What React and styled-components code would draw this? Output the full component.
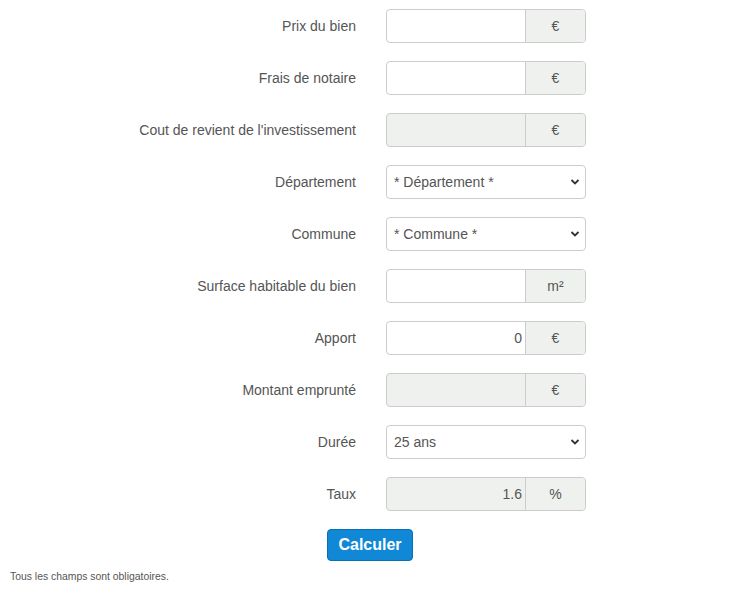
import React from "react";
import styled, { createGlobalStyle } from "styled-components";

const GlobalStyle = createGlobalStyle`
  body {
    margin: 0;
    background: #fff;
    font-family: "Liberation Sans", Arial, sans-serif;
    color: #555;
  }
`;

const Page = styled.div`
  width: 740px;
  padding-top: 9px;
  box-sizing: border-box;
`;

const Form = styled.form`
  display: grid;
  grid-template-columns: 356px 200px;
  column-gap: 30px;
  row-gap: 18px;
  align-items: center;
`;

const Label = styled.label`
  text-align: right;
  font-size: 14px;
  color: #555;
`;

const Group = styled.div`
  display: flex;
  height: 34px;
  border: 1px solid #ccc;
  border-radius: 4px;
  box-sizing: border-box;
  overflow: hidden;
  background: ${(p) => (p.$disabled ? "#eef1ee" : "#fff")};
`;

const Input = styled.input`
  flex: 1;
  min-width: 0;
  border: none;
  outline: none;
  background: transparent;
  padding: 0 3px 0 8px;
  font-family: inherit;
  font-size: 14px;
  color: #555;
  text-align: right;
`;

const Addon = styled.span`
  width: 59px;
  display: flex;
  align-items: center;
  justify-content: center;
  background: #eef1ee;
  border-left: 1px solid #ccc;
  font-size: 14px;
  color: #555;
`;

const SelectWrap = styled.div`
  position: relative;
  height: 34px;
`;

const Select = styled.select`
  appearance: none;
  width: 100%;
  height: 34px;
  border: 1px solid #ccc;
  border-radius: 4px;
  background: #fff;
  padding: 0 24px 0 7px;
  font-family: inherit;
  font-size: 14px;
  color: #555;
  outline: none;
`;

const Chevron = styled.svg`
  position: absolute;
  right: 6px;
  top: 13px;
  pointer-events: none;
`;

const Actions = styled.div`
  display: flex;
  justify-content: center;
  margin-top: 18px;
`;

const Button = styled.button`
  background: #1088d6;
  border: 1px solid #0b6fb4;
  border-radius: 4px;
  color: #fff;
  font-family: inherit;
  font-weight: bold;
  font-size: 16px;
  height: 32px;
  padding: 0 10px;
`;

const Note = styled.p`
  margin: 10px 0 0 10px;
  font-size: 10.4px;
  color: #555;
`;

const fields = [
  { label: "Prix du bien", type: "input", unit: "€" },
  { label: "Frais de notaire", type: "input", unit: "€" },
  { label: "Cout de revient de l'investissement", type: "input", unit: "€", disabled: true },
  { label: "Département", type: "select", options: ["* Département *"] },
  { label: "Commune", type: "select", options: ["* Commune *"] },
  { label: "Surface habitable du bien", type: "input", unit: "m²" },
  { label: "Apport", type: "input", unit: "€", value: "0" },
  { label: "Montant emprunté", type: "input", unit: "€", disabled: true },
  { label: "Durée", type: "select", options: ["25 ans"] },
  { label: "Taux", type: "input", unit: "%", value: "1.6", disabled: true },
];

function Field({ f }) {
  if (f.type === "select") {
    return (
      <SelectWrap>
        <Select defaultValue={f.options[0]}>
          {f.options.map((o) => (
            <option key={o}>{o}</option>
          ))}
        </Select>
        <Chevron width="10" height="8" viewBox="0 0 10 8">
          <path d="M1.5 2 L5 5.5 L8.5 2" fill="none" stroke="#333" strokeWidth="1.8" />
        </Chevron>
      </SelectWrap>
    );
  }
  return (
    <Group $disabled={f.disabled}>
      <Input defaultValue={f.value || ""} disabled={f.disabled} />
      <Addon>{f.unit}</Addon>
    </Group>
  );
}

export default function App() {
  return (
    <Page>
      <GlobalStyle />
      <Form onSubmit={(e) => e.preventDefault()}>
        {fields.map((f) => (
          <React.Fragment key={f.label}>
            <Label>{f.label}</Label>
            <Field f={f} />
          </React.Fragment>
        ))}
      </Form>
      <Actions>
        <Button type="submit">Calculer</Button>
      </Actions>
      <Note>Tous les champs sont obligatoires.</Note>
    </Page>
  );
}
